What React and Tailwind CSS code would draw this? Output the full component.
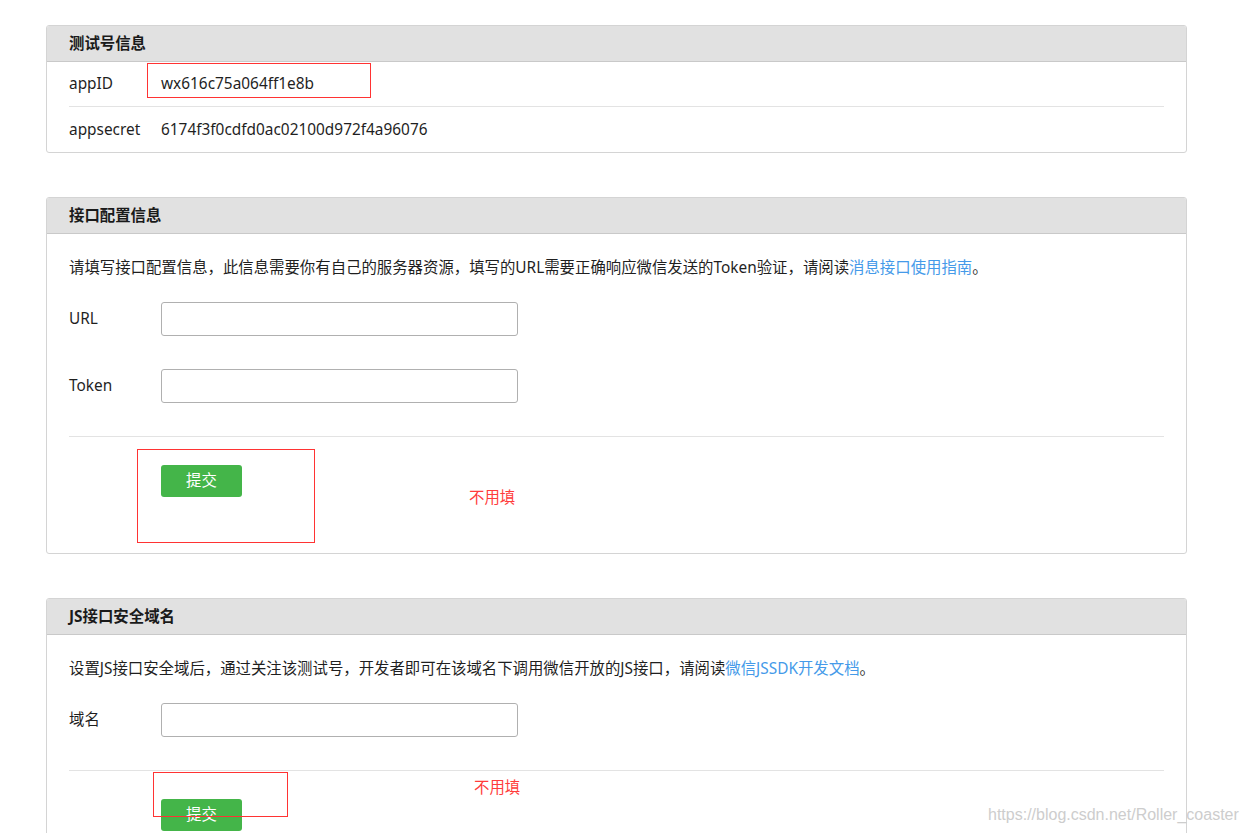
import React from "react";

const font = { fontFamily: '"Noto Sans", "Noto Sans CJK SC", sans-serif' };

function Header({ children }) {
  return (
    <div className="h-[36px] bg-[#e1e1e1] border-b border-[#c9c9c9] px-[22px] flex items-center text-[15.4px] font-bold text-[#1a1a1a]">
      {children}
    </div>
  );
}

function Field({ label, className = "" }) {
  return (
    <div className={"flex items-center " + className}>
      <div className="w-[92px] text-[15.4px] text-[#1f1f1f]">{label}</div>
      <input
        type="text"
        className="w-[357px] h-[34px] border border-[#b0b0b0] rounded-[3px] bg-white outline-none px-2"
      />
    </div>
  );
}

function SubmitArea({ boxClass, noteClass }) {
  return (
    <div className="relative pt-[28px] pb-[56px]">
      <button className="ml-[92px] w-[81px] h-[32px] bg-[#44b549] rounded-[3px] text-white text-[15.4px] flex items-center justify-center">
        提交
      </button>
      <div className={"absolute border border-[#ff3333] pointer-events-none " + boxClass}></div>
      <div className={"absolute text-[15.4px] leading-[22px] text-[#ff3c3c] " + noteClass}>不用填</div>
    </div>
  );
}

export default function App() {
  return (
    <div className="relative bg-white min-h-[833px] pt-[25px] pb-[20px]" style={font}>
      <div className="ml-[46px] w-[1141px]">
        {/* Panel 1 */}
        <div className="border border-[#d4d4d4] rounded-[3px] overflow-hidden mb-[44px]">
          <Header>测试号信息</Header>
          <div className="px-[22px]">
            <div className="relative h-[45px] flex items-center border-b border-[#e3e3e3] text-[15.4px] text-[#1f1f1f]">
              <div className="w-[92px]">appID</div>
              <div>wx616c75a064ff1e8b</div>
              <div className="absolute left-[78px] top-[1px] w-[224px] h-[35px] border border-[#ff3333]"></div>
            </div>
            <div className="h-[45px] flex items-center text-[15.4px] text-[#1f1f1f]">
              <div className="w-[92px]">appsecret</div>
              <div>6174f3f0cdfd0ac02100d972f4a96076</div>
            </div>
          </div>
        </div>

        {/* Panel 2 */}
        <div className="border border-[#d4d4d4] rounded-[3px] overflow-hidden mb-[44px]">
          <Header>接口配置信息</Header>
          <div className="px-[22px] pt-[23px]">
            <p className="text-[15.4px] leading-[22px] text-[#1f1f1f]">
              请填写接口配置信息，此信息需要你有自己的服务器资源，填写的URL需要正确响应微信发送的Token验证，请阅读
              <span className="text-[#459ae9]">消息接口使用指南</span>。
            </p>
            <Field label="URL" className="mt-[23px]" />
            <Field label="Token" className="mt-[33px]" />
            <div className="mt-[33px] border-t border-[#e3e3e3]"></div>
            <SubmitArea
              boxClass="left-[68px] top-[12px] w-[178px] h-[94px]"
              noteClass="left-[400px] top-[50px]"
            />
          </div>
        </div>

        {/* Panel 3 */}
        <div className="border border-[#d4d4d4] rounded-[3px] overflow-hidden">
          <Header>JS接口安全域名</Header>
          <div className="px-[22px] pt-[23px]">
            <p className="text-[15.4px] leading-[22px] text-[#1f1f1f]">
              设置JS接口安全域后，通过关注该测试号，开发者即可在该域名下调用微信开放的JS接口，请阅读
              <span className="text-[#459ae9]">微信JSSDK开发文档</span>。
            </p>
            <Field label="域名" className="mt-[23px]" />
            <div className="mt-[33px] border-t border-[#e3e3e3]"></div>
            <SubmitArea
              boxClass="left-[84px] top-[1px] w-[135px] h-[45px]"
              noteClass="left-[405px] top-[6px]"
            />
          </div>
        </div>
      </div>

      <div
        className="absolute left-[988px] top-[805px] text-[16px] leading-[20px] text-[#cdcdcd] whitespace-nowrap pointer-events-none"
        style={{ fontFamily: '"Liberation Sans", Arial, sans-serif' }}
      >
        https://blog.csdn.net/Roller_coaster
      </div>
    </div>
  );
}
